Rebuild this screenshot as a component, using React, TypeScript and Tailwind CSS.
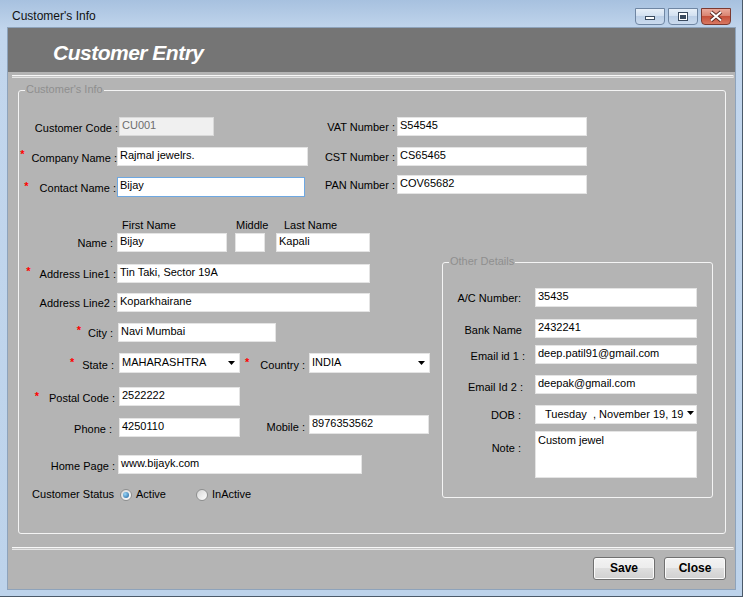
import React from 'react';
import clsx from 'clsx';
import { twMerge } from 'tailwind-merge';

interface BoxProps {
  value?: string;
  className?: string;
  focused?: boolean;
  disabled?: boolean;
}

const TextBox: React.FC<BoxProps> = ({ value, className, focused, disabled }) => (
  <div
    className={twMerge(
      clsx(
        'h-[19px] shrink-0 border px-[2px] pt-[1px] leading-[13px] whitespace-nowrap overflow-hidden',
        disabled ? 'bg-[#f0f0f0] border-[#d9d9d9] text-[#6d6d6d]' : 'bg-white text-black border-[#e4e4e4]',
        focused && 'border-[#6ea8e2]',
      ),
      className,
    )}
  >
    {value}
  </div>
);

const Arrow: React.FC<{ className?: string }> = ({ className }) => (
  <svg className={clsx('shrink-0', className)} width="7" height="4" viewBox="0 0 7 4">
    <path d="M0 0h7L3.5 4z" fill="#000" />
  </svg>
);

const ComboBox: React.FC<BoxProps> = ({ value, className }) => (
  <div className={twMerge('h-[20px] shrink-0 bg-white border border-[#e4e4e4] flex items-start', className)}>
    <div className="flex-1 pl-[2px] pt-[2px] leading-[13px] overflow-hidden whitespace-nowrap">{value}</div>
    <Arrow className="mt-[7px] mr-[4px]" />
  </div>
);

interface LblProps {
  label: string;
  req?: boolean;
  lw: string; // width of the label box
  lp?: string; // label padding top
  ap?: string; // asterisk padding top
  ag?: string; // asterisk gap
}

const Lbl: React.FC<LblProps> = ({ label, req, lw, lp = 'pt-[4px]', ap = 'pt-[1px]', ag = 'mr-[8px]' }) => (
  <div className={clsx('flex justify-end shrink-0 leading-[13px]', lw)}>
    {req && <span className={clsx('text-[#ff0000] font-bold', ap, ag)}>*</span>}
    <span className={clsx('whitespace-nowrap', lp)}>{label}</span>
  </div>
);

const Field: React.FC<LblProps & { className?: string; children?: React.ReactNode }> = ({
  className,
  children,
  ...lbl
}) => (
  <div className={twMerge('flex items-start', className)}>
    <Lbl {...lbl} />
    {children}
  </div>
);

const Radio: React.FC<{ checked?: boolean; className?: string }> = ({ checked, className }) => (
  <span
    className={clsx(
      'w-[12px] h-[12px] rounded-full border border-[#8e8f8f] bg-[linear-gradient(135deg,#d6d6d6,#ffffff)] flex items-center justify-center shrink-0',
      className,
    )}
  >
    {checked && <span className="w-[6px] h-[6px] rounded-full bg-[radial-gradient(circle_at_35%_35%,#9ad6f7,#1b5f9c)]" />}
  </span>
);

const WinButton: React.FC<{ kind: 'min' | 'max' | 'close' }> = ({ kind }) => (
  <div
    className={clsx(
      'w-[30px] h-[17px] border rounded-b-[4px] flex items-center justify-center',
      kind === 'close'
        ? 'bg-[linear-gradient(#eaa99b,#d98572_45%,#c5503a_50%,#d87862)] border-[#7c3a30]'
        : 'bg-[linear-gradient(#e7eff8,#d3e1f1_45%,#bccfe7_50%,#cbdbee)] border-[#6f86a3]',
    )}
  >
    <svg width="28" height="15" viewBox="0 0 28 15">
      {kind === 'min' && <rect x="9.5" y="7.5" width="9" height="3" fill="#fff" stroke="#3a4a5e" />}
      {kind === 'max' && (
        <>
          <rect x="9.5" y="3.5" width="9" height="8" fill="#fff" stroke="#3a4a5e" />
          <rect x="11.5" y="6.5" width="5" height="3" fill="#3a4a5e" stroke="#3a4a5e" />
        </>
      )}
      {kind === 'close' && (
        <>
          <path d="M9 3l10 8.5M19 3L9 11.5" stroke="#5a2a24" strokeWidth="3.8" />
          <path d="M9 3l10 8.5M19 3L9 11.5" stroke="#fff" strokeWidth="2" />
        </>
      )}
    </svg>
  </div>
);

const Separator: React.FC<{ className?: string }> = ({ className }) => (
  <div
    className={clsx(
      'ml-[4px] w-[722px] h-[3px] border-t border-b border-t-[#f8f8f8] border-b-[#e6e6e6] bg-[#c6c6c6] rounded-r-[2px]',
      className,
    )}
  />
);

const Button: React.FC<{ label: string }> = ({ label }) => (
  <div className="w-[62px] h-[23px] border border-[#707070] rounded-[3px] bg-[linear-gradient(#f3f3f3,#ececec_50%,#dedede_50%,#d0d0d0)] shadow-[inset_0_0_0_1px_#fbfbfb] flex items-center justify-center text-[12px] font-bold leading-[14px] text-black pb-[1px]">
    {label}
  </div>
);

const OtherDetails: React.FC = () => (
  <div className="relative ml-[12px] mt-[43px] w-[271px] h-[236px] border border-[#f4f4f4] rounded-[3px] shrink-0">
    <span className="absolute -top-[8px] left-[6px] px-[1px] bg-[#b4b4b4] leading-[13px] text-[#8f8f8f]">
      Other Details
    </span>
    <div className="flex flex-col pt-[25px]">
      <Field label="A/C Number:" lw="w-[78px]" lp="pt-[4px]">
        <TextBox value="35435" className="ml-[14px] w-[162px]" />
      </Field>
      <Field label="Bank Name" lw="w-[79px]" lp="pt-[5px]" className="mt-[12px]">
        <TextBox value="2432241" className="ml-[13px] w-[162px]" />
      </Field>
      <Field label="Email id 1 :" lw="w-[82px]" lp="pt-[5px]" className="mt-[7px]">
        <TextBox value="deep.patil91@gmail.com" className="ml-[10px] w-[162px]" />
      </Field>
      <Field label="Email Id 2 :" lw="w-[80px]" lp="pt-[6px]" className="mt-[11px]">
        <TextBox value="deepak@gmail.com" className="ml-[12px] w-[162px]" />
      </Field>
      <Field label="DOB :" lw="w-[78px]" lp="pt-[4px]" className="mt-[11px]">
        <div className="ml-[14px] w-[162px] h-[19px] bg-white border border-[#e4e4e4] flex items-start">
          <div className="ml-[9px] w-[138px] pt-[2px] leading-[13px] whitespace-nowrap flex">
            <span className="w-[48px] shrink-0">Tuesday</span>
            <span>, November 19, 19</span>
          </div>
          <Arrow className="ml-[4px] mt-[5px]" />
        </div>
      </Field>
      <Field label="Note :" lw="w-[78px]" lp="pt-[11px]" className="mt-[7px]">
        <TextBox value="Custom jewel" className="ml-[14px] w-[162px] h-[47px] pt-[2px]" />
      </Field>
    </div>
  </div>
);

const CustomerInfo: React.FC = () => (
  <div className="relative ml-[10px] mt-[12px] w-[708px] h-[444px] border border-[#f4f4f4] rounded-[3px] shrink-0">
    <span className="absolute -top-[8px] left-[6px] px-[1px] bg-[#b4b4b4] leading-[13px] text-[#8f8f8f]">
      Customer's Info
    </span>

    {/* top block */}
    <div className="flex pt-[26px]">
      <div className="w-[290px] flex flex-col shrink-0">
        <Field label="Customer Code :" lw="w-[99px]" lp="pt-[5px]">
          <TextBox disabled value="CU001" className="ml-[1px] w-[95px]" />
        </Field>
        <Field label="Company Name :" req lw="w-[98px]" lp="pt-[5px]" ap="pt-[1px]" ag="mr-[7px]" className="mt-[11px]">
          <TextBox value="Rajmal jewelrs." className="w-[191px]" />
        </Field>
        <Field
          label="Contact Name :"
          req
          lw="w-[97px]"
          lp="pt-[5px]"
          ap="pt-[3px]"
          ag="mr-[11px]"
          className="mt-[11px]"
        >
          <TextBox focused value="Bijay" className="ml-[1px] w-[188px] h-[20px]" />
        </Field>
      </div>
      <div className="flex flex-col">
        <Field label="VAT Number :" lw="w-[86px]">
          <TextBox value="S54545" className="ml-[2px] w-[190px]" />
        </Field>
        <Field label="CST Number :" lw="w-[86px]" lp="pt-[4px]" className="mt-[11px]">
          <TextBox value="CS65465" className="ml-[2px] w-[190px]" />
        </Field>
        <Field label="PAN Number :" lw="w-[86px]" lp="pt-[4px]" className="mt-[9px]">
          <TextBox value="COV65682" className="ml-[2px] w-[190px]" />
        </Field>
      </div>
    </div>

    {/* lower block */}
    <div className="flex items-start mt-[22px]">
      <div className="w-[411px] flex flex-col shrink-0">
        <div className="flex h-[13px] leading-[13px] pl-[103px]">
          <span className="w-[114px]">First Name</span>
          <span className="w-[48px]">Middle</span>
          <span>Last Name</span>
        </div>
        <Field label="Name :" lw="w-[94px]" className="mt-[1px]">
          <TextBox value="Bijay" className="ml-[4px] w-[110px]" />
          <TextBox className="ml-[8px] w-[30px]" />
          <TextBox value="Kapali" className="ml-[11px] w-[94px]" />
        </Field>
        <Field label="Address Line1 :" req lw="w-[97px]" ag="mr-[9px]" className="mt-[12px]">
          <TextBox value="Tin Taki, Sector 19A" className="ml-[1px] w-[253px]" />
        </Field>
        <Field label="Address Line2 :" lw="w-[97px]" className="mt-[10px]">
          <TextBox value="Koparkhairane" className="ml-[1px] w-[253px]" />
        </Field>
        <Field label="City :" req lw="w-[94px]" ag="mr-[7px]" className="mt-[11px]">
          <TextBox value="Navi Mumbai" className="ml-[5px] w-[158px]" />
        </Field>
        <Field label="State :" req lw="w-[95px]" lp="pt-[6px]" ap="pt-[3px]" className="mt-[11px]">
          <ComboBox value="MAHARASHTRA" className="ml-[5px] w-[121px]" />
          <Lbl label="Country :" req lw="w-[65px]" lp="pt-[6px]" ap="pt-[3px]" ag="mr-[11px]" />
          <ComboBox value="INDIA" className="ml-[4px] w-[121px]" />
        </Field>
        <Field label="Postal Code :" req lw="w-[96px]" lp="pt-[5px]" ap="pt-[3px]" ag="mr-[10px]" className="mt-[14px]">
          <TextBox value="2522222" className="ml-[4px] w-[121px]" />
        </Field>
        <div className="flex items-start mt-[9px]">
          <Lbl label="Phone :" lw="w-[93px]" lp="pt-[8px]" />
          <TextBox value="4250110" className="mt-[3px] ml-[7px] w-[121px]" />
          <Lbl label="Mobile :" lw="w-[65px]" lp="pt-[6px]" />
          <TextBox value="8976353562" className="ml-[4px] w-[120px]" />
        </div>
        <Field label="Home Page :" lw="w-[96px]" lp="pt-[5px]" className="mt-[18px]">
          <TextBox value="www.bijayk.com" className="ml-[3px] w-[244px]" />
        </Field>
        <div className="flex items-center h-[13px] leading-[13px] mt-[14px]">
          <div className="w-[95px] text-right whitespace-nowrap shrink-0">Customer Status</div>
          <Radio checked className="ml-[6px]" />
          <span className="ml-[4px]">Active</span>
          <Radio className="ml-[30px]" />
          <span className="ml-[4px]">InActive</span>
        </div>
      </div>
      <OtherDetails />
    </div>
  </div>
);

const App: React.FC = () => {
  return (
    <div className="w-[743px] h-[597px] flex flex-col border-r border-b border-[#4b5a6a] bg-[linear-gradient(to_bottom,#a7c1df,#c2d6ed_30px,#bdd3eb)] font-['Liberation_Sans',Arial,sans-serif] text-[11px] text-black overflow-hidden">
      {/* title bar */}
      <div className="h-[28px] flex justify-between shrink-0">
        <div className="pl-[12px] pt-[9px] text-[12px] leading-[14px] text-[#111]">Customer's Info</div>
        <div className="flex gap-[3px] pt-[8px] pr-[11px]">
          <WinButton kind="min" />
          <WinButton kind="max" />
          <WinButton kind="close" />
        </div>
      </div>

      {/* client area */}
      <div className="ml-[8px] w-[727px] h-[561px] bg-[#b4b4b4] flex flex-col shrink-0 shadow-[0_0_0_1px_#8ea3bb]">
        <div className="h-[44px] bg-[#757575] shrink-0 pl-[45px] pt-[13px]">
          <span className="text-[21px] leading-[24px] font-bold italic text-white tracking-[-0.5px]">Customer Entry</span>
        </div>
        <Separator className="mt-[3px]" />
        <CustomerInfo />
        <Separator className="mt-[13px]" />
        <div className="flex justify-end gap-[9px] pr-[9px] mt-[7px]">
          <Button label="Save" />
          <Button label="Close" />
        </div>
      </div>
    </div>
  );
};

export default App;
